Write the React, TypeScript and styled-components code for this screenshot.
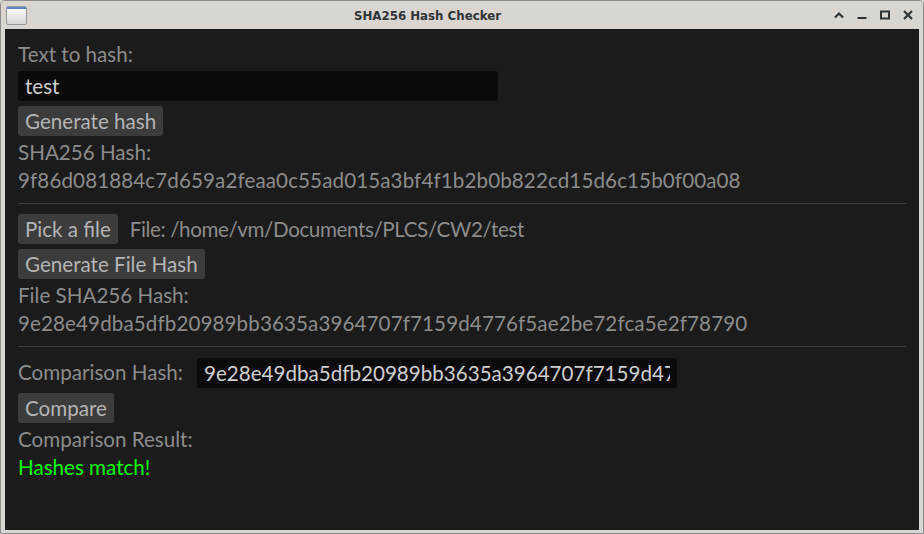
import React from "react";
import styled, { createGlobalStyle } from "styled-components";

const Global = createGlobalStyle`
  html, body { margin: 0; padding: 0; background: #d9d5d1; }
  body { width: 924px; height: 534px; overflow: hidden; }
  * { box-sizing: border-box; }
`;

const UI_FONT = `"Lato", "Noto Sans", "DejaVu Sans", sans-serif`;

const Frame = styled.div`
  width: 924px;
  height: 534px;
  display: flex;
  flex-direction: column;
  background: #d9d5d1;
  border: 1px solid #8e8c8a;
  border-radius: 5px 5px 0 0;
  overflow: hidden;
`;

const TitleBar = styled.div`
  height: 28px;
  flex: 0 0 28px;
  display: flex;
  align-items: center;
  background: #d9d5d1;
  font-family: "DejaVu Sans", sans-serif;
`;

const IconSlot = styled.div`
  width: 30px;
  padding-left: 5px;
  display: flex;
  align-items: center;
`;

const Title = styled.div`
  flex: 1;
  text-align: center;
  font-size: 11.8px;
  font-weight: bold;
  color: #2e3436;
  padding-top: 1px;
`;

const Controls = styled.div`
  display: flex;
  align-items: center;
  gap: 13px;
  padding: 0 10px 0 10px;
  height: 100%;
`;

const ControlIcon = styled.svg`
  display: block;
  width: 10px;
  height: 10px;
  color: #2e3436;
`;

const Panel = styled.div`
  flex: 1;
  margin: 0 4px 3px 4px;
  background: #1b1b1b;
  padding: 14px 13px;
  display: flex;
  flex-direction: column;
  align-items: flex-start;
  gap: 5px;
  font-family: ${UI_FONT};
  font-size: 20.6px;
`;

const Label = styled.div<{ $tone?: "normal" | "success"; $tracking?: number }>`
  height: 23px;
  line-height: 23px;
  white-space: nowrap;
  letter-spacing: ${(p) => p.$tracking ?? 0}px;
  color: ${(p) => (p.$tone === "success" ? "#00ff00" : "#8c8c8c")};
`;

const TextField = styled.input`
  width: 480px;
  height: 30px;
  flex: 0 0 auto;
  border: none;
  outline: none;
  border-radius: 3px;
  background: #0a0a0a;
  color: #cfcfcf;
  font-family: ${UI_FONT};
  font-size: 20.6px;
  padding: 0 7px;
  margin: 0;
`;

const Button = styled.button`
  height: 30px;
  border: none;
  border-radius: 3px;
  background: #3c3c3c;
  color: #b4b4b4;
  font-family: ${UI_FONT};
  font-size: 20.6px;
  padding: 0 7px;
  margin: 0;
  line-height: 30px;
  white-space: nowrap;
`;

const Row = styled.div<{ $gap: number; $height?: number }>`
  display: flex;
  align-items: center;
  gap: ${(p) => p.$gap}px;
  min-height: ${(p) => p.$height ?? 30}px;
`;

const Separator = styled.div`
  align-self: stretch;
  height: 12px;
  display: flex;
  flex-direction: column;
  &::before {
    content: "";
    display: block;
    margin-top: 6px;
    height: 1px;
    background: #3c3c3c;
  }
`;

const WindowIcon = () => (
  <svg width="21" height="19" viewBox="0 0 21 19">
    <defs>
      <linearGradient id="wg" x1="0" y1="0" x2="0" y2="1">
        <stop offset="0" stopColor="#ffffff" />
        <stop offset="1" stopColor="#d4d4d4" />
      </linearGradient>
    </defs>
    <rect x="0.5" y="0.5" width="20" height="18" rx="1.5" fill="url(#wg)" stroke="#9a9a9a" />
    <rect x="1" y="1" width="19" height="2" fill="#5b86c8" />
  </svg>
);

const App: React.FC = () => {
  const hash1 = "9f86d081884c7d659a2feaa0c55ad015a3bf4f1b2b0b822cd15d6c15b0f00a08";
  const hash2 = "9e28e49dba5dfb20989bb3635a3964707f7159d4776f5ae2be72fca5e2f78790";
  return (
    <>
      <Global />
      <Frame>
        <TitleBar>
          <IconSlot>
            <WindowIcon />
          </IconSlot>
          <Title>SHA256 Hash Checker</Title>
          <Controls>
            <ControlIcon viewBox="0 0 10 10">
              <polyline points="1,7.5 5,3.5 9,7.5" fill="none" stroke="currentColor" strokeWidth="2.2" />
            </ControlIcon>
            <ControlIcon viewBox="0 0 10 10">
              <rect x="0.5" y="7" width="9" height="2" fill="currentColor" />
            </ControlIcon>
            <ControlIcon viewBox="0 0 10 10">
              <rect x="1" y="1.5" width="8" height="7" fill="none" stroke="currentColor" strokeWidth="2" />
            </ControlIcon>
            <ControlIcon viewBox="0 0 10 10">
              <path d="M1,1 L9,9 M9,1 L1,9" stroke="currentColor" strokeWidth="2.2" />
            </ControlIcon>
          </Controls>
        </TitleBar>
        <Panel>
          <Label>Text to hash:</Label>
          <TextField readOnly defaultValue="test" />
          <Button>Generate hash</Button>
          <Label>SHA256 Hash:</Label>
          <Label $tracking={0.1}>{hash1}</Label>
          <Separator />
          <Row $gap={12}>
            <Button>Pick a file</Button>
            <Label $tracking={-0.4}>File: /home/vm/Documents/PLCS/CW2/test</Label>
          </Row>
          <Button>Generate File Hash</Button>
          <Label>File SHA256 Hash:</Label>
          <Label $tracking={0.1}>{hash2}</Label>
          <Separator />
          <Row $gap={14} $height={31}>
            <Label>Comparison Hash:</Label>
            <TextField readOnly defaultValue={hash2} />
          </Row>
          <Button>Compare</Button>
          <Label>Comparison Result:</Label>
          <Label $tone="success">Hashes match!</Label>
        </Panel>
      </Frame>
    </>
  );
};

export default App;
